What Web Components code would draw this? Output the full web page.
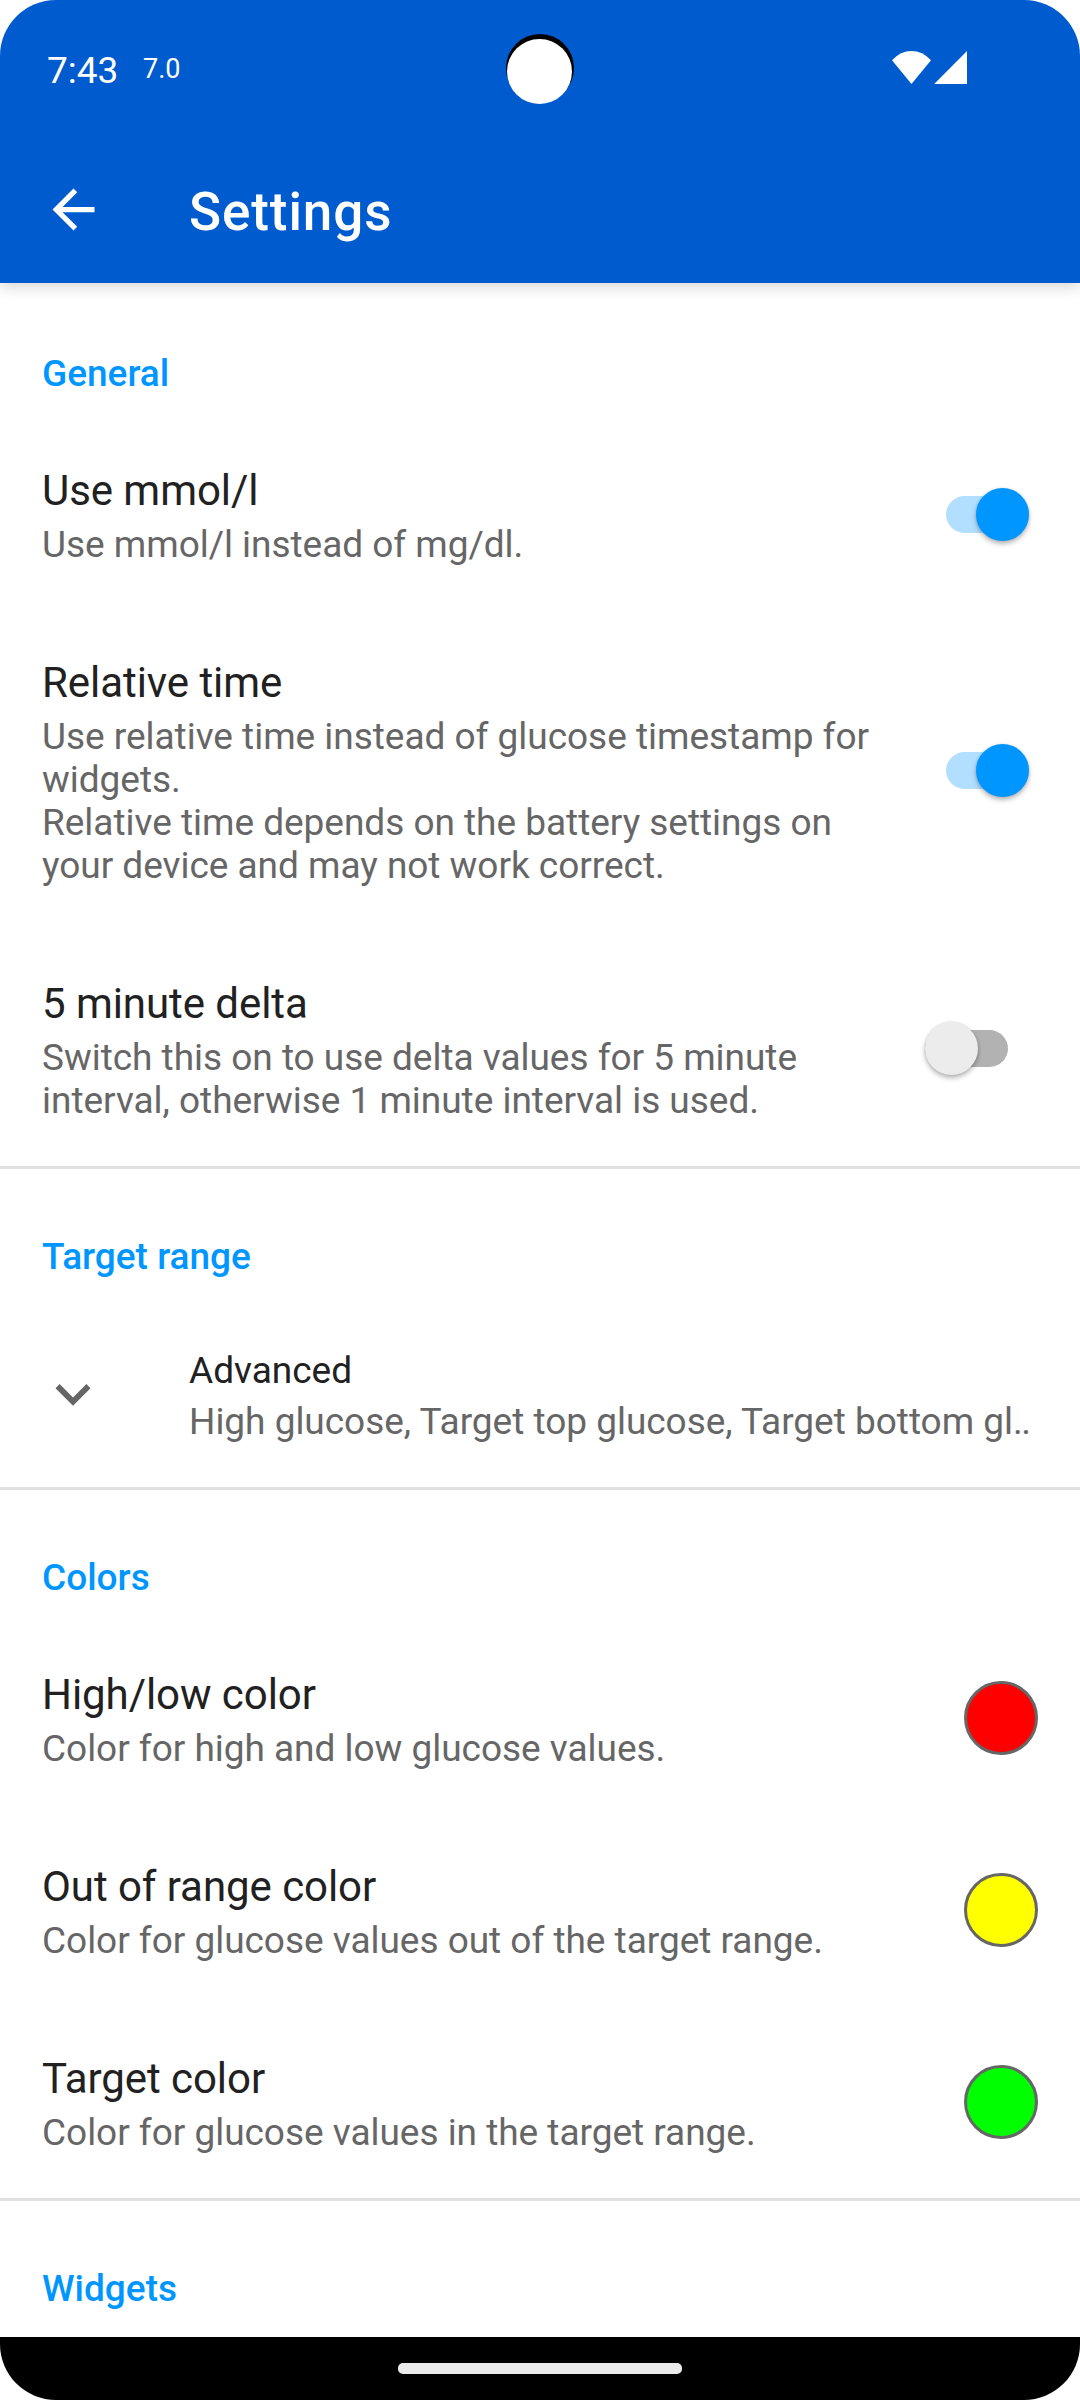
<!DOCTYPE html>
<html lang="en">
<head>
<meta charset="utf-8">
<title>Settings</title>
<style>
html, body { margin: 0; background: #fff; }
body { font-family: Roboto, "Liberation Sans", sans-serif; }
</style>
</head>
<body>
<device-screen>
  <status-bar slot="top" time="7:43" note="7.0"></status-bar>
  <app-bar slot="top">Settings</app-bar>
  <pref-category label="General">
    <pref-row>Use mmol/l<span slot="summary">Use mmol/l instead of mg/dl.</span><toggle-switch slot="widget" on></toggle-switch></pref-row>
    <pref-row>Relative time<span slot="summary">Use relative time instead of glucose timestamp for widgets.<br>Relative time depends on the battery settings on your device and may not work correct.</span><toggle-switch slot="widget" on></toggle-switch></pref-row>
    <pref-row>5 minute delta<span slot="summary">Switch this on to use delta values for 5 minute interval, otherwise 1 minute interval is used.</span><toggle-switch slot="widget"></toggle-switch></pref-row>
  </pref-category>
  <pref-category label="Target range" divided>
    <pref-expander>Advanced<span slot="summary">High glucose, Target top glucose, Target bottom gl<span style="letter-spacing:-1.4px">..</span></span></pref-expander>
  </pref-category>
  <pref-category label="Colors" divided>
    <pref-row>High/low color<span slot="summary">Color for high and low glucose values.</span><color-dot slot="widget" color="#ff0000"></color-dot></pref-row>
    <pref-row>Out of range color<span slot="summary">Color for glucose values out of the target range.</span><color-dot slot="widget" color="#ffff00"></color-dot></pref-row>
    <pref-row>Target color<span slot="summary">Color for glucose values in the target range.</span><color-dot slot="widget" color="#00ff00"></color-dot></pref-row>
  </pref-category>
  <pref-category label="Widgets" divided></pref-category>
  <nav-bar slot="bottom"></nav-bar>
</device-screen>
<script>
class Base extends HTMLElement {
  constructor() {
    super();
    this.attachShadow({ mode: 'open' });
  }
  connectedCallback() {
    this.shadowRoot.innerHTML = '<style>:host,*{box-sizing:border-box}' + this.css() + '</style>' + this.html();
  }
}

customElements.define('device-screen', class extends Base {
  css() { return `
    :host { display: flex; flex-direction: column; width: 1080px; height: 2400px; border-radius: 56px; overflow: hidden; background: #fff; }
    header { flex: none; height: 283px; background: #005bce; box-shadow: 0 4px 14px rgba(0,0,0,.16); z-index: 1; }
    main { flex: 1; min-height: 0; overflow: hidden; }
    footer { flex: none; }`; }
  html() { return '<header><slot name="top"></slot></header><main><slot></slot></main><footer><slot name="bottom"></slot></footer>'; }
});

customElements.define('status-bar', class extends Base {
  css() { return `
    :host { display: flex; position: relative; height: 136px; color: #fff; padding: 49px 0 0 47px; }
    .time { font-size: 37px; line-height: 43px; width: 96px; }
    .note { font-size: 27px; line-height: 32px; padding-top: 4px; flex: 1; }
    .icons { width: 75px; height: 33px; margin: 2px 113px 0 0; }
    .camera { position: absolute; left: 506px; top: 34px; }`; }
  html() { return `
    <div class="time">${this.getAttribute('time')}</div>
    <div class="note">${this.getAttribute('note')}</div>
    <svg class="icons" viewBox="0 0 75 33" fill="#fff"><path d="M19.5 33 0 9.3Q8.5 0 19.5 0T39 9.3z"/><path d="M75 0V33H42.2z"/></svg>
    <svg class="camera" width="68" height="71"><circle cx="34" cy="34" r="34"/><circle cx="33.5" cy="37.5" r="32.5" fill="#fff"/></svg>`; }
});

customElements.define('app-bar', class extends Base {
  css() { return `
    :host { display: flex; height: 147px; padding: 42px 42px 0; color: #fff; gap: 84px; }
    svg { width: 63px; height: 63px; }
    h1 { margin: 3px 0 0; font-size: 53px; line-height: 62px; font-weight: 500; letter-spacing: .9px; }`; }
  html() { return `
    <svg viewBox="0 0 24 24" fill="#fff"><path d="M20 11H7.83l5.59-5.59L12 4l-8 8 8 8 1.41-1.41L7.83 13H20z"/></svg>
    <h1><slot></slot></h1>`; }
});

customElements.define('pref-category', class extends Base {
  css() { return `
    :host { display: block; }
    h2 { margin: 0; height: 135px; padding: 69px 42px 0; font-size: 37px; line-height: 43px; font-weight: 500; color: #0096ff; }
    :host([divided]) h2 { border-top: 3px solid #e0e0e0; padding-top: 66px; }`; }
  html() { return `<h2>${this.getAttribute('label')}</h2><slot></slot>`; }
});

customElements.define('pref-row', class extends Base {
  css() { return `
    :host { display: flex; align-items: center; justify-content: space-between; padding: 0 42px; }
    .text { width: 850px; padding: 48px 0 44px; }
    .title { font-size: 42px; line-height: 49px; letter-spacing: -.06px; color: #212121; }
    .summary { margin-top: 8px; font-size: 37px; line-height: 43px; letter-spacing: -.025px; color: #666; }`; }
  html() { return `
    <div class="text"><div class="title"><slot></slot></div><div class="summary"><slot name="summary"></slot></div></div>
    <slot name="widget"></slot>`; }
});

customElements.define('pref-expander', class extends Base {
  css() { return `
    :host { display: flex; align-items: center; height: 186px; padding-left: 38px; }
    svg { flex: none; width: 70px; height: 70px; margin: 0 81px 1px 0; }
    .text { padding-top: 4px; white-space: nowrap; font-size: 37px; line-height: 43px; color: #212121; }
    .summary { margin-top: 8px; letter-spacing: -.02px; color: #666; }`; }
  html() { return `
    <svg viewBox="0 0 24 24" fill="#666"><path d="M16.59 8.59 12 13.17 7.41 8.59 6 10l6 6 6-6z"/></svg>
    <div class="text"><div><slot></slot></div><div class="summary"><slot name="summary"></slot></div></div>`; }
});

customElements.define('toggle-switch', class extends Base {
  css() { return `
    :host { display: flex; align-items: center; width: 83px; height: 53px; margin-right: 30px; }
    .track { width: 100%; height: 37px; border-radius: 19px; background: #b2b2b2; display: flex; align-items: center; }
    .thumb { flex: none; width: 53px; height: 53px; border-radius: 50%; background: #ececec; box-shadow: 0 3px 5px rgba(0,0,0,.28), 0 0 3px rgba(0,0,0,.1); }
    :host([on]) { width: 82.5px; margin-right: 9.3px; }
    :host([on]) .track { background: #b2dfff; justify-content: flex-end; }
    :host([on]) .thumb { background: #0096ff; }`; }
  html() { return '<div class="track"><div class="thumb"></div></div>'; }
});

customElements.define('color-dot', class extends Base {
  css() { return `
    :host { display: block; width: 74px; height: 74px; border-radius: 50%; border: 3px solid #666; background: ${this.getAttribute('color')}; }`; }
  html() { return ''; }
});

customElements.define('nav-bar', class extends Base {
  css() { return `
    :host { display: flex; justify-content: center; height: 63px; padding-top: 26px; background: #000; }
    div { width: 284px; height: 11px; border-radius: 5px; background: #ebebeb; }`; }
  html() { return '<div></div>'; }
});
</script>
</body>
</html>
